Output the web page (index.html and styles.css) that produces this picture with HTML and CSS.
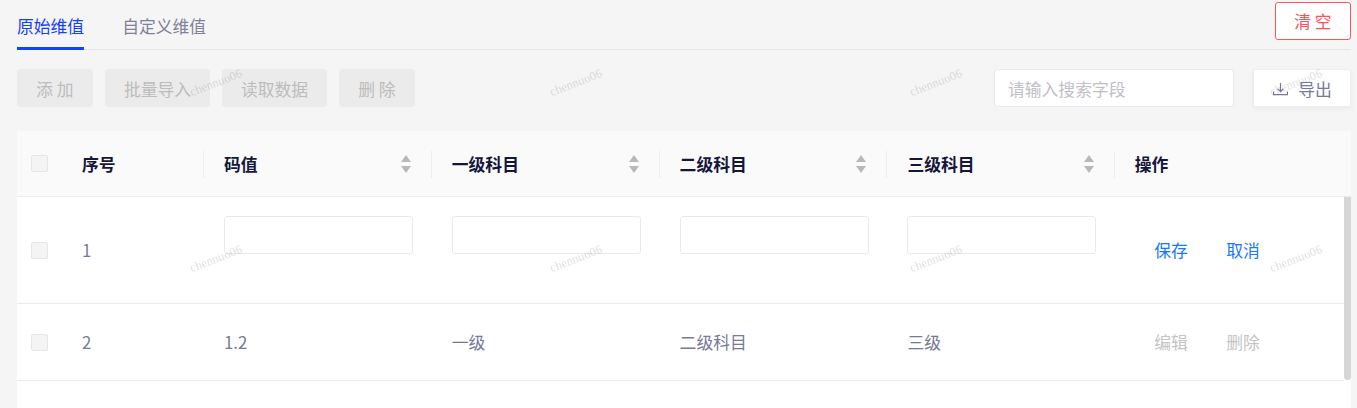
FILE: index.html
```html
<!DOCTYPE html>
<html lang="zh-CN">

<head>
  <meta charset="UTF-8">
  <meta name="viewport" content="width=device-width, initial-scale=1.0">
  <title>维值管理</title>
  <link rel="stylesheet" href="styles.css">
</head>

<body>
  <div class="page">
    <div class="tabs">
      <a class="tab active">原始维值</a>
      <a class="tab">自定义维值</a>
      <button class="btn-clear" type="button">清 空</button>
    </div>

    <div class="toolbar">
      <button class="btn" type="button" disabled>添 加</button>
      <button class="btn wide" type="button" disabled>批量导入</button>
      <button class="btn wide" type="button" disabled>读取数据</button>
      <button class="btn" type="button" disabled>删 除</button>
      <input class="search" type="text" placeholder="请输入搜索字段">
      <button class="btn-export" type="button">
        <svg width="15" height="14" viewBox="0 0 15 14" fill="none" stroke="currentColor" stroke-width="1.2">
          <path d="M7.5 1v8.5M4.7 6.8l2.8 2.8 2.8-2.8M.6 9.5v3.2h13.8V9.5" />
        </svg>
        导出
      </button>
    </div>

    <div class="table-box">
      <div class="row head">
        <div class="cell col-check"><span class="check"></span></div>
        <div class="cell col-no">序号</div>
        <div class="cell col-data sep">码值<span class="sorter"></span></div>
        <div class="cell col-data sep">一级科目<span class="sorter"></span></div>
        <div class="cell col-data sep">二级科目<span class="sorter"></span></div>
        <div class="cell col-data sep">三级科目<span class="sorter"></span></div>
        <div class="cell col-ops sep">操作</div>
      </div>

      <div class="body">
        <div class="rows">
          <div class="row row-edit">
            <div class="cell col-check"><span class="check"></span></div>
            <div class="cell col-no">1</div>
            <div class="cell col-data top"><input class="cell-input" type="text"></div>
            <div class="cell col-data top"><input class="cell-input" type="text"></div>
            <div class="cell col-data top"><input class="cell-input" type="text"></div>
            <div class="cell col-data top"><input class="cell-input" type="text"></div>
            <div class="cell col-ops links">
              <a class="link">保存</a>
              <a class="link">取消</a>
            </div>
          </div>
          <div class="row row-plain">
            <div class="cell col-check"><span class="check"></span></div>
            <div class="cell col-no">2</div>
            <div class="cell col-data">1.2</div>
            <div class="cell col-data">一级</div>
            <div class="cell col-data">二级科目</div>
            <div class="cell col-data">三级</div>
            <div class="cell col-ops links">
              <a class="link off">编辑</a>
              <a class="link off">删除</a>
            </div>
          </div>
        </div>
        <div class="scroll-thumb"></div>
      </div>
    </div>
  </div>

  <!-- 水印 -->
  <div class="watermarks">
    <span>chennuo06</span><span>chennuo06</span><span>chennuo06</span><span>chennuo06</span>
    <span>chennuo06</span><span>chennuo06</span><span>chennuo06</span><span>chennuo06</span>
  </div>
</body>

</html>
```

FILE: styles.css
```css
* {
  box-sizing: border-box;
}

html,
body {
  height: 408px;
  overflow: hidden;
}

body {
  margin: 0;
  background-color: #f5f5f5;
  font-family: "Noto Sans CJK SC", "Noto Sans", sans-serif;
  font-size: 16.8px;
  color: #767a96;
}

button,
input {
  font-family: inherit;
  font-size: 16.8px;
}

.page {
  display: flex;
  flex-direction: column;
  height: 408px;
  padding: 2px 6px 0 17px;
}

/* 标签页 */
.tabs {
  display: flex;
  flex-shrink: 0;
  height: 48px;
  border-bottom: 1px solid #e6e6ea;
}

.tab {
  height: 48px;
  padding-top: 11px;
  margin-right: 38px;
  line-height: 26px;
  color: #7f829a;
}

.tab.active {
  color: #1440ff;
  border-bottom: 3px solid #1440ff;
}

.btn-clear {
  width: 76px;
  height: 38px;
  margin-left: auto;
  padding: 0 0 1px;
  background-color: #fff;
  border: 1px solid #ff5257;
  border-radius: 3px;
  color: #ff5257;
}

/* 工具栏 */
.toolbar {
  display: flex;
  flex-shrink: 0;
  gap: 12px;
  margin-top: 19px;
}

.btn {
  width: 76px;
  height: 38px;
  padding: 1px 0 0;
  background-color: #ebebeb;
  border: 1px solid #ebebed;
  border-radius: 3px;
  color: #bcbcbc;
}

.btn.wide {
  width: 105px;
}

.search {
  width: 240px;
  height: 38px;
  margin-left: auto;
  padding: 1px 13px 0;
  background-color: #fff;
  border: 1px solid #e8e8f0;
  border-radius: 3px;
  outline: none;
}

.search::placeholder {
  color: #c0c0c8;
}

.btn-export {
  display: flex;
  align-items: center;
  justify-content: center;
  gap: 10px;
  width: 98px;
  height: 38px;
  margin-left: 7px;
  padding: 1px 0 0 1px;
  background-color: #fff;
  border: 1px solid #eeeef2;
  border-radius: 3px;
  box-shadow: 0 2px 4px rgba(30, 30, 80, 0.05);
  color: #767a96;
}

/* 表格 */
.table-box {
  flex: 1;
  margin-top: 24px;
  background-color: #fff;
  border-radius: 4px 4px 0 0;
}

.row {
  display: flex;
  border-bottom: 1px solid #ececf0;
}

.head {
  height: 66px;
  padding-right: 7px;
  background-color: #fafafa;
  border-radius: 4px 4px 0 0;
  font-weight: 700;
  color: #14163a;
}

.row-edit {
  height: 107px;
}

.row-plain {
  height: 77px;
}

.cell {
  position: relative;
  display: flex;
  align-items: center;
  flex-shrink: 0;
}

.col-check {
  width: 65px;
  padding-left: 14px;
}

.col-no {
  width: 122px;
}

.col-data {
  width: 227.8px;
  padding-left: 20px;
}

.col-ops {
  width: 228px;
  padding-left: 19.5px;
}

.col-ops.links {
  gap: 38.5px;
  padding-left: 39px;
}

.top {
  align-items: flex-start;
  padding-top: 19px;
}

/* 表头竖线 */
.sep::before {
  content: "";
  position: absolute;
  left: -1px;
  top: 20px;
  height: 27px;
  border-left: 1px solid #ededed;
}

.check {
  width: 17px;
  height: 17px;
  background-color: #f4f4f4;
  border: 1px solid #e6e6ea;
  border-radius: 2px;
}

.sorter {
  position: relative;
  width: 11px;
  height: 18px;
  margin-left: auto;
  margin-right: 20px;
}

.sorter::before,
.sorter::after {
  content: "";
  position: absolute;
  left: 0;
  border-left: 5.5px solid transparent;
  border-right: 5.5px solid transparent;
}

.sorter::before {
  top: 0;
  border-bottom: 7px solid #b8b8b8;
}

.sorter::after {
  bottom: 0;
  border-top: 7px solid #b8b8b8;
}

.cell-input {
  width: 189px;
  height: 38px;
  background-color: #fff;
  border: 1px solid #e8e8f0;
  border-radius: 3px;
  outline: none;
}

.link {
  color: #1677ff;
}

.link.off {
  color: #c4c4c4;
}

.body {
  display: flex;
}

.rows {
  width: 1327px;
}

.scroll-thumb {
  width: 7px;
  height: 183px;
  background-color: #d6d6d6;
  border-radius: 0 0 4px 4px;
}

/* 水印层盖在页面上面 */
.watermarks {
  position: absolute;
  inset: 0;
  overflow: hidden;
  display: grid;
  grid-template-columns: repeat(4, 360px);
  grid-auto-rows: 176px;
  padding: 40px 0 0 188px;
  pointer-events: none;
}

.watermarks span {
  display: block;
  width: 70px;
  height: 80px;
  line-height: 80px;
  font-family: "Liberation Serif", serif;
  font-size: 12.5px;
  white-space: nowrap;
  color: rgba(120, 120, 120, 0.25);
  transform: rotate(-21deg);
}
```
